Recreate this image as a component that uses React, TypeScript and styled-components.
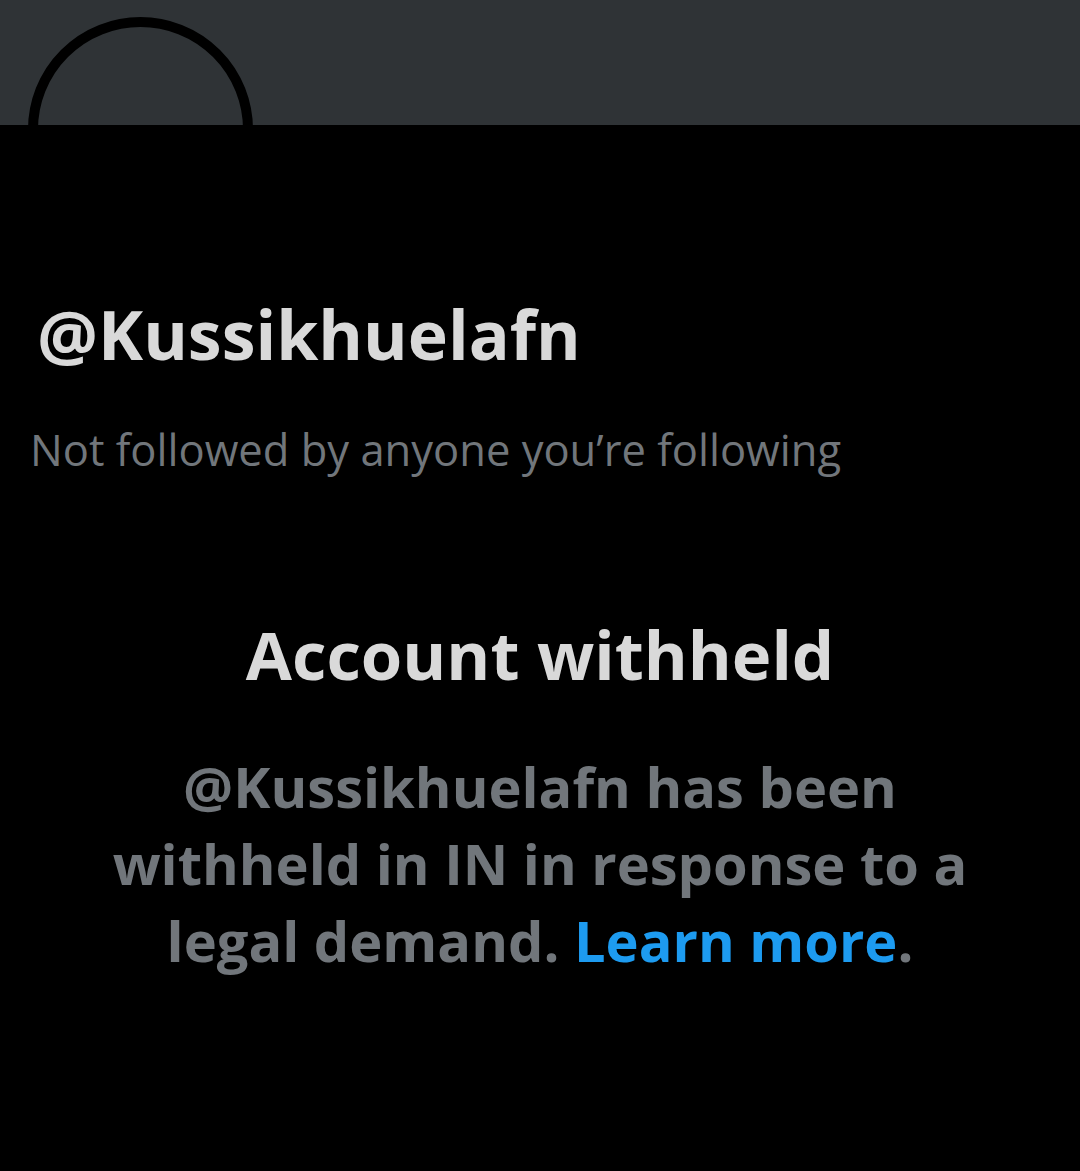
import React from "react";
import styled, { createGlobalStyle } from "styled-components";

const GlobalStyle = createGlobalStyle`
	html, body {
		margin: 0;
		padding: 0;
		background: #000;
	}
	body {
		font-family: "Open Sans", "Liberation Sans", sans-serif;
		-webkit-font-smoothing: antialiased;
	}
`;

const Page = styled.div`
	width: 1080px;
	height: 1171px;
	background: #000;
	overflow: hidden;
`;

const Header = styled.div`
	position: relative;
	height: 125px;
	background: #2f3336;
`;

const Avatar = styled.div`
	position: absolute;
	left: 28px;
	top: 17px;
	width: 225px;
	height: 225px;
	box-sizing: border-box;
	border: 10px solid #000;
	border-radius: 50%;
`;

const Info = styled.div`
	padding: 169px 30px 0;
	display: flex;
	flex-direction: column;
`;

const Handle = styled.div`
	margin-left: 7px;
	font-size: 68px;
	line-height: 80px;
	font-weight: 700;
	color: #d9d9d9;
`;

const Followers = styled.div`
	margin-top: 48px;
	font-size: 43.5px;
	line-height: 56px;
	color: #71767b;
`;

const Notice = styled.div`
	margin-top: 136px;
	display: flex;
	flex-direction: column;
	align-items: center;
	text-align: center;
`;

const Title = styled.h1`
	margin: 0;
	font-size: 67px;
	line-height: 80px;
	font-weight: 700;
	color: #d9d9d9;
`;

const Body = styled.p`
	margin: 54px 0 0;
	max-width: 900px;
	font-size: 56px;
	line-height: 77px;
	font-weight: 700;
	color: #71767b;
`;

const Link = styled.a`
	color: #1d9bf0;
	text-decoration: none;
`;

export default function App(): JSX.Element {
	return <Page>
		<GlobalStyle />
		<Header>
			<Avatar />
		</Header>
		<Info>
			<Handle>@Kussikhuelafn</Handle>
			<Followers>Not followed by anyone you’re following</Followers>
		</Info>
		<Notice>
			<Title>Account withheld</Title>
			<Body>
				@Kussikhuelafn has been withheld in IN in response to a legal demand. <Link href="#">Learn more</Link>.
			</Body>
		</Notice>
	</Page>;
}
